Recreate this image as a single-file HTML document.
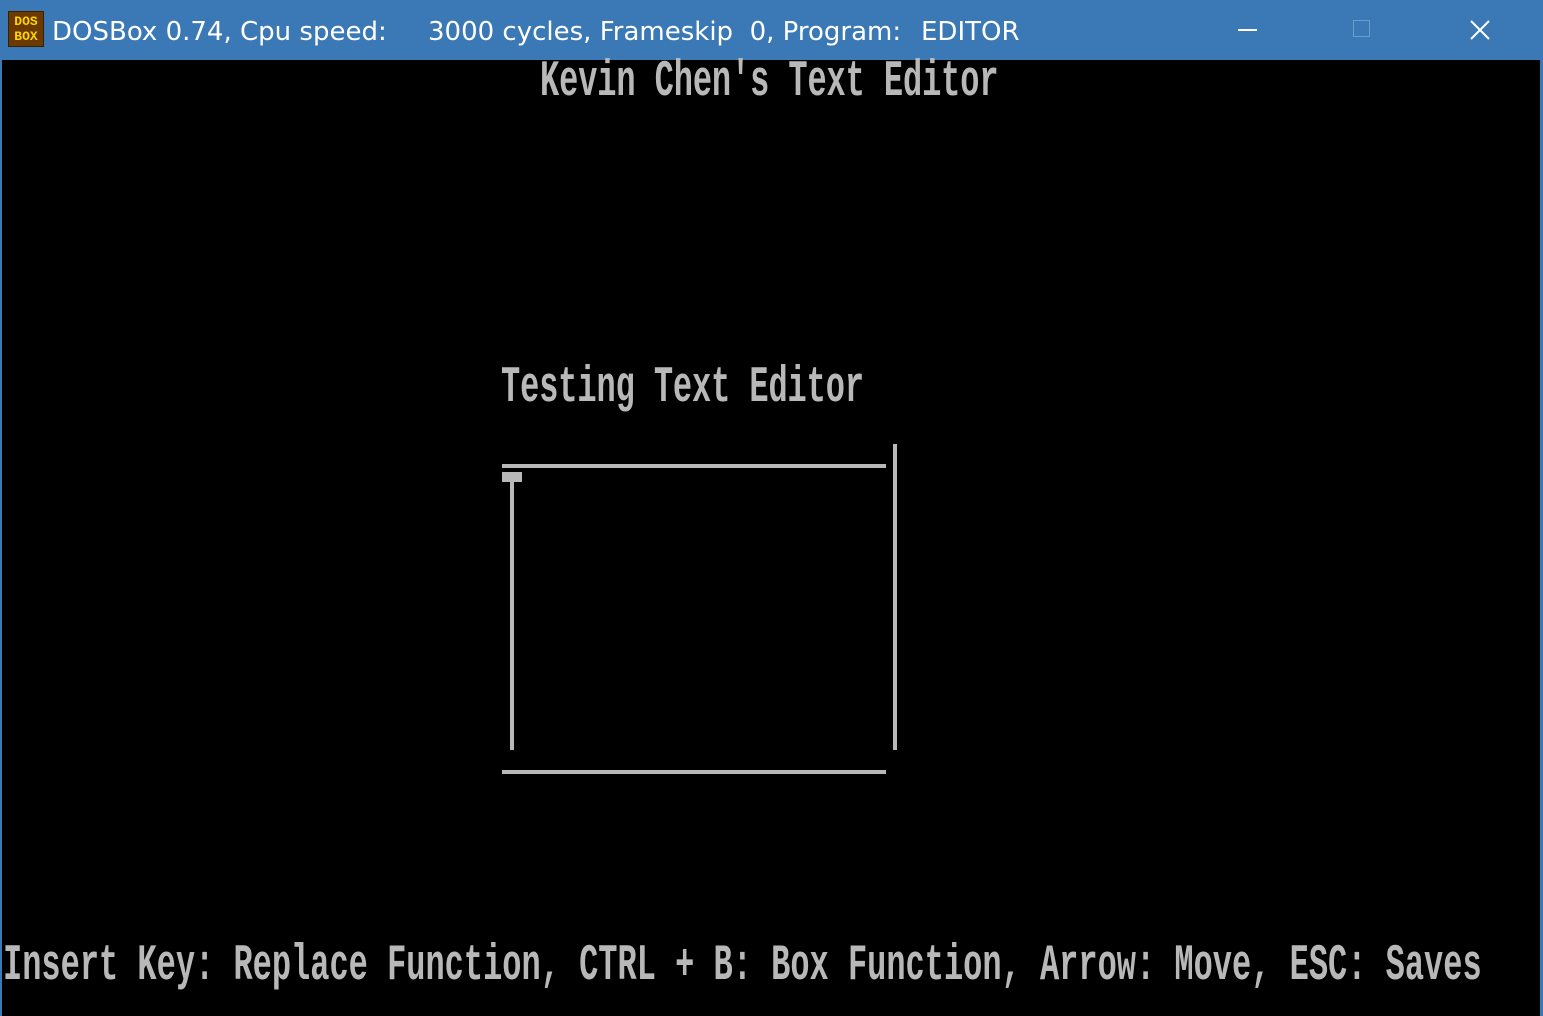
<!DOCTYPE html>
<html><head><meta charset="utf-8"><style>
html,body{margin:0;padding:0;background:#000;width:1543px;height:1016px;overflow:hidden;position:relative}
.bar{position:absolute;left:0;top:0;width:1543px;height:60px;background:#3a79b6}
.bar .t{position:absolute;top:15px;font-family:"Segoe UI","DejaVu Sans","Liberation Sans",sans-serif;font-size:26px;color:#fff;white-space:pre;line-height:34px}
.icon{position:absolute;left:8px;top:11px;width:36px;height:36px;background:#6b3a00;border:1px solid #3a2000;font-family:"Liberation Mono",monospace;font-weight:bold;font-size:13px;line-height:15px;color:#ffd400;text-align:center;box-sizing:border-box;padding-top:2px}
.side{position:absolute;top:60px;width:3px;height:956px;background:#3a79b6}
.dos{position:absolute;font-family:"Liberation Mono",monospace;font-weight:bold;color:#b8b8b8;font-size:32px;white-space:pre;transform-origin:0 0;transform:scaleY(1.58);line-height:32px;letter-spacing:-0.1px}
.ln{position:absolute;background:#b8b8b8}
</style></head><body>
<div class="bar">
<div class="icon">DOS<br>BOX</div>
<div class="t" style="left:52px">DOSBox 0.74, Cpu speed:</div>
<div class="t" style="left:428px">3000 cycles, Frameskip  0, Program:</div>
<div class="t" style="left:921px">EDITOR</div>
<div style="position:absolute;left:1238px;top:29px;width:19px;height:2px;background:#fff"></div>
<div style="position:absolute;left:1353px;top:20px;width:17px;height:17px;border:1px solid #6a9ccc;box-sizing:border-box"></div>
<svg style="position:absolute;left:1469px;top:19px" width="22" height="22"><path d="M2 2L20 20M20 2L2 20" stroke="#fff" stroke-width="2"/></svg>
</div>
<div class="side" style="left:0;width:2px"></div>
<div class="side" style="left:1540px"></div>
<div class="dos" style="left:540px;top:57px">Kevin Chen's Text Editor</div>
<div class="dos" style="left:501px;top:363px">Testing Text Editor</div>
<div class="dos" style="left:3px;top:941px;letter-spacing:0px">Insert Key: Replace Function, CTRL + B: Box Function, Arrow: Move, ESC: Saves</div>
<div class="ln" style="left:502px;top:464px;width:384px;height:4px"></div>
<div class="ln" style="left:502px;top:472px;width:20px;height:10px"></div>
<div class="ln" style="left:510px;top:482px;width:4px;height:268px"></div>
<div class="ln" style="left:893px;top:444px;width:4px;height:306px"></div>
<div class="ln" style="left:502px;top:770px;width:384px;height:4px"></div>
</body></html>
